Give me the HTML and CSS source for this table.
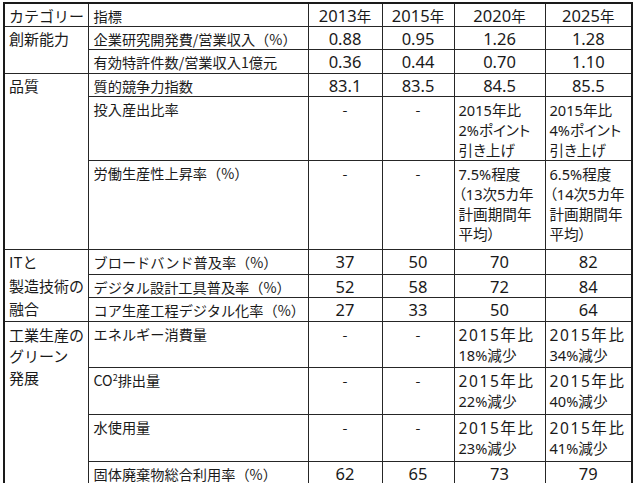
FILE: index.html
```html
<!DOCTYPE html>
<html lang="ja">
<head>
<meta charset="utf-8">
<title>指標表</title>
<link rel="stylesheet" href="styles.css">
</head>
<body>
<table class="grid">
  <colgroup>
    <col class="c-cat"><col class="c-ind"><col class="c-y1"><col class="c-y2"><col class="c-y3"><col class="c-y4">
  </colgroup>
  <tr class="r22">
    <th class="cat">カテゴリー</th>
    <th class="ind">指標</th>
    <th class="num">2013<span class="cj">年</span></th>
    <th class="num">2015<span class="cj">年</span></th>
    <th class="num">2020<span class="cj">年</span></th>
    <th class="num">2025<span class="cj">年</span></th>
  </tr>
  <tr class="r23">
    <td class="cat" rowspan="2">創新能力</td>
    <td class="ind">企業研究開発費/営業収入（%）</td>
    <td class="num">0.88</td><td class="num">0.95</td><td class="num">1.26</td><td class="num">1.28</td>
  </tr>
  <tr class="r24">
    <td class="ind">有効特許件数/営業収入1億元</td>
    <td class="num">0.36</td><td class="num">0.44</td><td class="num">0.70</td><td class="num">1.10</td>
  </tr>
  <tr class="r23">
    <td class="cat" rowspan="3">品質</td>
    <td class="ind">質的競争力指数</td>
    <td class="num">83.1</td><td class="num">83.5</td><td class="num">84.5</td><td class="num">85.5</td>
  </tr>
  <tr class="r63">
    <td class="ind">投入産出比率</td>
    <td class="dash">-</td><td class="dash">-</td>
    <td class="txt">2015年比<br>2%ポイント<br>引き上げ</td>
    <td class="txt">2015年比<br>4%ポイント<br>引き上げ</td>
  </tr>
  <tr class="r89">
    <td class="ind">労働生産性上昇率（%）</td>
    <td class="dash">-</td><td class="dash">-</td>
    <td class="txt">7.5%程度<br>（13次5カ年<br>計画期間年<br>平均）</td>
    <td class="txt">6.5%程度<br>（14次5カ年<br>計画期間年<br>平均）</td>
  </tr>
  <tr class="r24">
    <td class="cat it" rowspan="3">ITと<br>製造技術の<br>融合</td>
    <td class="ind">ブロードバンド普及率（%）</td>
    <td class="num">37</td><td class="num">50</td><td class="num">70</td><td class="num">82</td>
  </tr>
  <tr class="r23">
    <td class="ind">デジタル設計工具普及率（%）</td>
    <td class="num">52</td><td class="num">58</td><td class="num">72</td><td class="num">84</td>
  </tr>
  <tr class="r23">
    <td class="ind">コア生産工程デジタル化率（%）</td>
    <td class="num">27</td><td class="num">33</td><td class="num">50</td><td class="num">64</td>
  </tr>
  <tr class="r46">
    <td class="cat green" rowspan="4">工業生産の<br>グリーン<br>発展</td>
    <td class="ind">エネルギー消費量</td>
    <td class="dash">-</td><td class="dash">-</td>
    <td class="txt"><span class="wide">2015年比</span><br>18%減少</td>
    <td class="txt"><span class="wide">2015年比</span><br>34%減少</td>
  </tr>
  <tr class="r47">
    <td class="ind">CO<span class="sup">2</span>排出量</td>
    <td class="dash">-</td><td class="dash">-</td>
    <td class="txt"><span class="wide">2015年比</span><br>22%減少</td>
    <td class="txt"><span class="wide">2015年比</span><br>40%減少</td>
  </tr>
  <tr class="r47">
    <td class="ind">水使用量</td>
    <td class="dash">-</td><td class="dash">-</td>
    <td class="txt"><span class="wide">2015年比</span><br>23%減少</td>
    <td class="txt"><span class="wide">2015年比</span><br>41%減少</td>
  </tr>
  <tr class="r23">
    <td class="ind">固体廃棄物総合利用率（%）</td>
    <td class="num">62</td><td class="num">65</td><td class="num">73</td><td class="num">79</td>
  </tr>
</table>
</body>
</html>
```

FILE: styles.css
```css
html, body {
  margin: 0;
  padding: 0;
  background: #ffffff;
}

.grid {
  margin: 2px 0 0 3px;
  border-collapse: collapse;
  table-layout: fixed;
  width: 628px;
  border: 2px solid #1a1a1a;
  font-family: "Noto Sans CJK JP", "Noto Sans", sans-serif;
  font-size: 14.2px;
  color: #1a1a1a;
}

.c-cat { width: 84px; }
.c-ind { width: 220px; }
.c-y1 { width: 74px; }
.c-y2 { width: 72px; }
.c-y3 { width: 91px; }
.c-y4 { width: 87px; }

.grid th,
.grid td {
  border: 1px solid #262626;
  padding: 2px 1px 0 5px;
  vertical-align: top;
  line-height: 20px;
  font-weight: normal;
  text-align: left;
  white-space: nowrap;
  overflow: hidden;
}

.r22 { height: 22px; }
.r23 { height: 23px; }
.r24 { height: 24px; }
.r46 { height: 46px; }
.r47 { height: 47px; }
.r63 { height: 63px; }
.r89 { height: 89px; }

.grid .cat {
  font-size: 15px;
  padding-left: 4px;
}

.grid .it { line-height: 23.5px; padding-top: 0; }
.grid .green { line-height: 21.5px; }

.grid .num {
  text-align: center;
  padding-left: 0;
  padding-right: 0;
  font-family: "Noto Sans", "Noto Sans CJK JP", sans-serif;
  font-size: 16.5px;
}

.num .cj {
  font-family: "Noto Sans CJK JP", sans-serif;
  font-size: 14.5px;
}

.grid .dash {
  text-align: center;
  padding-left: 0;
  padding-right: 0;
}

.grid .txt {
  font-family: "Noto Sans", "Noto Sans CJK JP", sans-serif;
  font-size: 14.6px;
  font-feature-settings: "palt";
  padding-top: 3px;
  padding-left: 4px;
}

.wide {
  font-size: 15.5px;
  letter-spacing: 1.6px;
  font-feature-settings: normal;
}

.sup {
  font-size: 9px;
  vertical-align: 5px;
  line-height: 0;
}
```
